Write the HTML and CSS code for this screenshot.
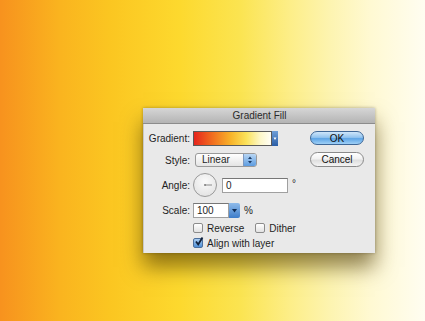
FILE: index.html
```html
<!DOCTYPE html>
<html>
<head>
  <title>Gradient Fill</title>
  <link rel="stylesheet" href="styles.css">
</head>
<body>
  <div class="dialog">
    <div class="title-bar">Gradient Fill</div>
    <div class="dialog-body">
      <div class="form">
        <div class="row">
          <span class="label">Gradient:</span>
          <div class="gradient-picker">
            <div class="gradient-swatch"></div>
            <div class="swatch-arrow">
              <svg width="6" height="15" viewBox="0 0 6 15"><path d="M1.5 6.5 L4.5 6.5 L3 9 Z" fill="#fff"/></svg>
            </div>
          </div>
        </div>

        <div class="row row-style">
          <span class="label">Style:</span>
          <div class="select">
            <span class="select-text">Linear</span>
            <div class="select-arrows">
              <svg width="12" height="12" viewBox="0 0 12 12"><path d="M4 5 L8 5 L6 2.5 Z M4 7 L8 7 L6 9.5 Z" fill="#1c3a66"/></svg>
            </div>
          </div>
        </div>

        <div class="row row-angle">
          <span class="label">Angle:</span>
          <div class="angle-dial">
            <svg width="24" height="24" viewBox="0 0 24 24"><line x1="12" y1="12" x2="19" y2="12" stroke="#8a8a8a" stroke-width="1"/><circle cx="12" cy="12" r="0.9" fill="#777"/></svg>
          </div>
          <div class="text-input angle-input">0</div>
          <span class="unit degree">&deg;</span>
        </div>

        <div class="row row-scale">
          <span class="label">Scale:</span>
          <div class="text-input scale-input">100</div>
          <div class="combo-arrow">
            <svg width="11" height="15" viewBox="0 0 11 15"><path d="M3 6 L8 6 L5.5 9.5 Z" fill="#102c55"/></svg>
          </div>
          <span class="unit">%</span>
        </div>

        <div class="row check-row">
          <label class="check"><span class="box"></span>Reverse</label>
          <label class="check check-dither"><span class="box"></span>Dither</label>
        </div>

        <div class="row check-row row-align">
          <label class="check">
            <span class="box checked">
              <svg width="10" height="10" viewBox="0 0 10 10"><path d="M2 4.5 L4.2 7.5 L8.5 0.5" fill="none" stroke="#10203a" stroke-width="1.8"/></svg>
            </span>Align with layer
          </label>
        </div>
      </div>

      <div class="buttons">
        <button class="btn btn-ok">OK</button>
        <button class="btn btn-cancel">Cancel</button>
      </div>
    </div>
  </div>
</body>
</html>
```

FILE: styles.css
```css
body {
  margin: 0;
  width: 425px;
  height: 321px;
  overflow: hidden;
  padding: 108px 0 0 143px;
  box-sizing: border-box;
  font-family: "Liberation Sans", Arial, sans-serif;
  font-size: 10px;
  color: #1e1e1e;
  background: linear-gradient(90deg, #f7921e 0px, #fab41f 60px, #fbc621 110px, #fdd92e 180px, #fbe451 240px, #fdee88 290px, #fdf4b0 330px, #fff9d2 370px, #fffdf1 425px);
}

.dialog {
  width: 232px;
  height: 145px;
  background-color: #e9e9e9;
  box-shadow: 0 14px 20px rgba(70, 50, 0, 0.6), 0 0 3px rgba(0, 0, 0, 0.3);
  display: flex;
  flex-direction: column;
}

.title-bar {
  height: 15px;
  line-height: 16px;
  text-align: center;
  color: #2a2a2a;
  background: linear-gradient(#d6d6d6, #b4b4b4);
  border-bottom: 1px solid #8c8c8c;
  padding-left: 1px;
}

.dialog-body {
  flex: 1;
  display: flex;
  border-left: 1px solid #c8c8c8;
}

.form {
  flex: 1;
  padding-top: 7px;
}

.row {
  display: flex;
  align-items: center;
}

.label {
  width: 46px;
  box-sizing: border-box;
  margin-right: 3px;
  text-align: right;
  white-space: nowrap;
}

.gradient-picker {
  display: flex;
  height: 15px;
}

.gradient-swatch {
  width: 77px;
  height: 13px;
  border: 1px solid #5a5a5a;
  background: linear-gradient(90deg, #e5251d 0%, #f2711f 25%, #f8b42a 48%, #fbe25a 68%, #fdf7c8 86%, #fffef6 100%);
}

.swatch-arrow {
  width: 6px;
  height: 15px;
  background: linear-gradient(#6f9fd8, #2b5ea6);
}

.row-style {
  margin-top: 7px;
  height: 14px;
}

.select {
  margin-left: 2px;
  width: 60px;
  height: 12px;
  display: flex;
  border: 1px solid #9a9a9a;
  border-radius: 3px;
  background: linear-gradient(#ffffff, #e4e4e4);
  overflow: hidden;
}

.select-text {
  flex: 1;
  padding-left: 6px;
  line-height: 12px;
}

.select-arrows {
  width: 12px;
  height: 12px;
  border-left: 1px solid #7d98c0;
  background: linear-gradient(#b8d6f4, #5d9ce0);
}

.row-angle {
  margin-top: 6px;
  height: 24px;
}

.angle-dial {
  width: 22px;
  height: 22px;
  border: 1px solid #9a9a9a;
  border-radius: 50%;
  background: radial-gradient(circle at 50% 35%, #fbfbfb, #dedede);
  overflow: hidden;
}

.angle-dial svg {
  display: block;
  margin: -1px;
}

.text-input {
  height: 13px;
  line-height: 13px;
  background-color: #fff;
  border: 1px solid #a0a0a0;
  border-top-color: #777;
  padding-left: 3px;
}

.angle-input {
  margin-left: 5px;
  width: 61px;
}

.unit {
  margin-left: 4px;
}

.degree {
  margin-left: 4px;
  margin-top: -3px;
}

.row-scale {
  margin-top: 6px;
  height: 15px;
}

.scale-input {
  width: 31px;
}

.combo-arrow {
  width: 11px;
  height: 15px;
  background: linear-gradient(#8fbbea, #3d7cc9);
  border-radius: 0 2px 2px 0;
}

.check-row {
  margin-top: 4px;
  height: 12px;
  padding-left: 49px;
}

.row-align {
  margin-top: 3px;
}

.check {
  display: flex;
  align-items: center;
}

.check-dither {
  margin-left: 11px;
}

.box {
  width: 8px;
  height: 8px;
  margin-right: 4px;
  border: 1px solid #8c8c8c;
  border-radius: 2px;
  background: linear-gradient(#ffffff, #e2e2e2);
  position: relative;
}

.box.checked {
  border-color: #4d6f9c;
  background: linear-gradient(#a9cdf1, #4f8fd6);
}

.box.checked svg {
  position: absolute;
  left: 0;
  top: -2px;
}

.buttons {
  width: 54px;
  margin-right: 11px;
  padding-top: 7px;
  display: flex;
  flex-direction: column;
  gap: 7px;
}

.btn {
  font-family: "Liberation Sans", Arial, sans-serif;
  font-size: 10px;
  color: #111;
  padding: 0;
  border-radius: 8px;
  cursor: pointer;
}

.btn-ok {
  height: 14px;
  border: 1px solid #3f6796;
  background: linear-gradient(#cfe6fa 0%, #93c4ef 45%, #5ea5e6 55%, #9fd0f6 100%);
}

.btn-cancel {
  height: 15px;
  border: 1px solid #8a8a8a;
  background: linear-gradient(#ffffff 0%, #f2f2f2 45%, #dedede 55%, #f4f4f4 100%);
}

.btn:focus {
  outline: none;
}
```
